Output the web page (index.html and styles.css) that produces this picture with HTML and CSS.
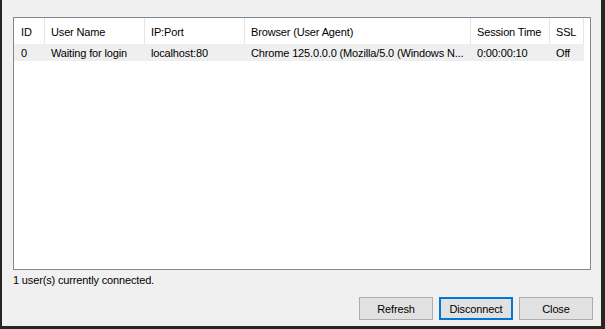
FILE: index.html
```html
<!DOCTYPE html>
<html lang="en">
<head>
    <meta charset="UTF-8">
    <meta name="viewport" content="width=device-width, initial-scale=1.0">
    <title>Connected Users</title>
    <link rel="stylesheet" href="styles.css">
</head>
<body>

<div class="window">

    <div class="user-list">
        <div class="row header-row">
            <div class="cell col-id">ID</div>
            <div class="cell col-name">User Name</div>
            <div class="cell col-ip">IP:Port</div>
            <div class="cell col-agent">Browser (User Agent)</div>
            <div class="cell col-time">Session Time</div>
            <div class="cell col-ssl">SSL</div>
        </div>
        <div class="row data-row">
            <div class="cell col-id">0</div>
            <div class="cell col-name">Waiting for login</div>
            <div class="cell col-ip">localhost:80</div>
            <div class="cell col-agent">Chrome 125.0.0.0 (Mozilla/5.0 (Windows N...</div>
            <div class="cell col-time">0:00:00:10</div>
            <div class="cell col-ssl">Off</div>
        </div>
    </div>

    <p class="status">1 user(s) currently connected.</p>

    <div class="buttons">
        <button class="btn">Refresh</button>
        <button class="btn btn-default">Disconnect</button>
        <button class="btn">Close</button>
    </div>

</div>

</body>
</html>
```

FILE: styles.css
```css
body {
    margin: 0;
    padding: 0;
    background-color: #f0f0f0;
    font-family: 'Liberation Sans', Arial, sans-serif;
    font-size: 11px;
    letter-spacing: -0.15px;
    color: #000;
}
.window {
    width: 605px;
    height: 329px;
    box-sizing: border-box;
    border-left: 2px solid #262626;
    border-right: 4px solid #262626;
    border-bottom: 3px solid #262626;
    padding: 17px 8px 6px 11px;
    display: flex;
    flex-direction: column;
    background-color: #f0f0f0;
}
.user-list {
    height: 253px;
    box-sizing: border-box;
    margin-right: 2px;
    border: 1px solid #828790;
    background-color: white;
}
.row {
    display: flex;
}
.cell {
    box-sizing: border-box;
    padding-left: 6px;
    white-space: nowrap;
    overflow: hidden;
}
.header-row {
    height: 26px;
}
.header-row .cell {
    border-right: 1px solid #e5e5e5;
    padding-top: 2px;
    line-height: 24px;
}
.data-row {
    height: 17px;
}
.data-row .cell {
    background-color: #efefef;
    padding-top: 1px;
    line-height: 16px;
}
.col-id { width: 31px; padding-left: 7px; }
.col-name { width: 100px; }
.col-ip { width: 100px; }
.col-agent { width: 226px; }
.col-time { width: 79px; }
.col-ssl { width: 34px; }
.status {
    margin: 4px 0 0 0;
    line-height: 13px;
}
.buttons {
    margin-top: auto;
    display: flex;
    justify-content: flex-end;
    gap: 6px;
}
.btn {
    width: 74px;
    height: 23px;
    box-sizing: border-box;
    background-color: #e1e1e1;
    border: 1px solid #adadad;
    font-family: 'Liberation Sans', Arial, sans-serif;
    font-size: 11px;
    letter-spacing: -0.15px;
    color: #000;
    padding: 0;
}
.btn-default {
    border-color: #0078d7;
    box-shadow: inset 0 0 0 1px #0078d7;
}
```
